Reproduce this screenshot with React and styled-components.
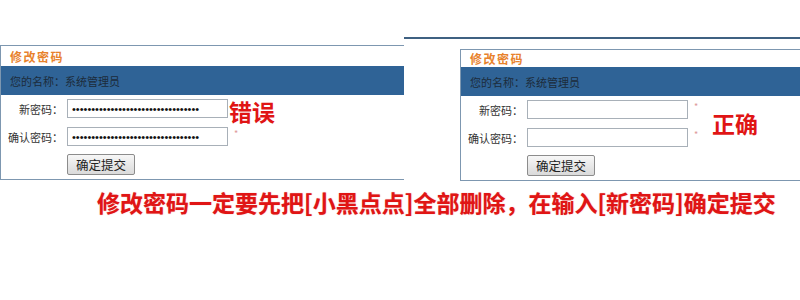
import React from 'react';
import styled, { createGlobalStyle } from 'styled-components';

const GlobalStyle = createGlobalStyle`
	body {
		margin: 0;
		background: #fff;
		font-family: 'Noto Sans CJK SC', 'Liberation Sans', sans-serif;
	}
`;

const Page = styled.div`
	width: 800px;
	height: 300px;
	background: #fff;
	display: flex;
	flex-direction: column;
	overflow: hidden;
`;

const Shots = styled.div`
	display: flex;
	align-items: flex-start;
`;

const LeftShot = styled.div`
	width: 404px;
	margin-top: 45px;
	position: relative;
`;

const RightShot = styled.div`
	flex: 1;
	margin-top: 37px;
	border-top: 2px solid #3f6182;
	padding: 10px 0 0 56px;
	position: relative;
`;

const Panel = styled.div`
	border: 1px solid #7d97b0;
	border-right: none;
	background: #fff;
`;

const Title = styled.div`
	height: ${(p) => p.$h}px;
	display: flex;
	align-items: center;
	padding-left: 9px;
	font-size: 12px;
	font-weight: bold;
	letter-spacing: 1.5px;
	color: #e8822c;
`;

const InfoBar = styled.div`
	height: 29px;
	background: #2f6396;
	display: flex;
	align-items: center;
	padding-left: 9px;
	font-size: 11px;
	color: #1c2b3a;
`;

const Form = styled.div`
	display: grid;
	grid-template-columns: 62px 161px auto;
	column-gap: 4px;
	row-gap: 9px;
	align-items: center;
	padding: 4px 0 4px 0;
`;

const Label = styled.label`
	font-size: 11px;
	color: #333;
	text-align: right;
`;

const Field = styled.input`
	box-sizing: border-box;
	width: 161px;
	height: 19px;
	border: 1px solid #a8b0b8;
	padding: 0 4px;
	font-family: 'Liberation Sans', sans-serif;
	font-size: 11px;
	color: #111;
	background: #fff;
	outline: none;
`;

const Star = styled.span`
	align-self: start;
	font-size: 9px;
	color: #d99;
	margin-left: 2px;
	visibility: ${(p) => (p.$hidden ? 'hidden' : 'visible')};
`;

const Submit = styled.button`
	grid-column: 2;
	justify-self: start;
	width: 68px;
	height: 21px;
	padding: 0;
	margin-top: -1px;
	border: 1px solid #8c8c8c;
	border-radius: 2px;
	background: linear-gradient(#f7f7f7, #dadada);
	font-family: 'Noto Sans CJK SC', sans-serif;
	font-size: 12.5px;
	color: #222;
`;

const Mark = styled.div`
	position: absolute;
	left: ${(p) => p.$x}px;
	top: ${(p) => p.$y}px;
	font-size: 23px;
	line-height: 1;
	font-weight: bold;
	color: #e01515;
`;

const Caption = styled.div`
	margin-top: 7px;
	padding-left: 97px;
	font-size: 23px;
	line-height: 28px;
	font-weight: bold;
	color: #e01515;
	white-space: nowrap;
	text-shadow: 0 0 1px rgba(224, 21, 21, 0.5);
`;

const dots = '•'.repeat(33);

const PwdPanel = ({ filled, titleH, hideFirstStar }) => (
	<Panel>
		<Title $h={titleH}>修改密码</Title>
		<InfoBar>您的名称：系统管理员</InfoBar>
		<Form>
			<Label>新密码：</Label>
			<Field type="text" readOnly value={filled ? dots : ''} />
			<Star $hidden={hideFirstStar}>*</Star>
			<Label>确认密码：</Label>
			<Field type="text" readOnly value={filled ? dots : ''} />
			<Star>*</Star>
			<Submit>确定提交</Submit>
		</Form>
	</Panel>
);

const App = () => (
	<Page>
		<GlobalStyle />
		<Shots>
			<LeftShot>
				<PwdPanel filled titleH={20} hideFirstStar />
				<Mark $x={229} $y={55}>错误</Mark>
			</LeftShot>
			<RightShot>
				<PwdPanel titleH={17} />
				<Mark $x={308} $y={73}>正确</Mark>
			</RightShot>
		</Shots>
		<Caption>修改密码一定要先把[小黑点点]全部删除，在输入[新密码]确定提交</Caption>
	</Page>
);

export default App;
